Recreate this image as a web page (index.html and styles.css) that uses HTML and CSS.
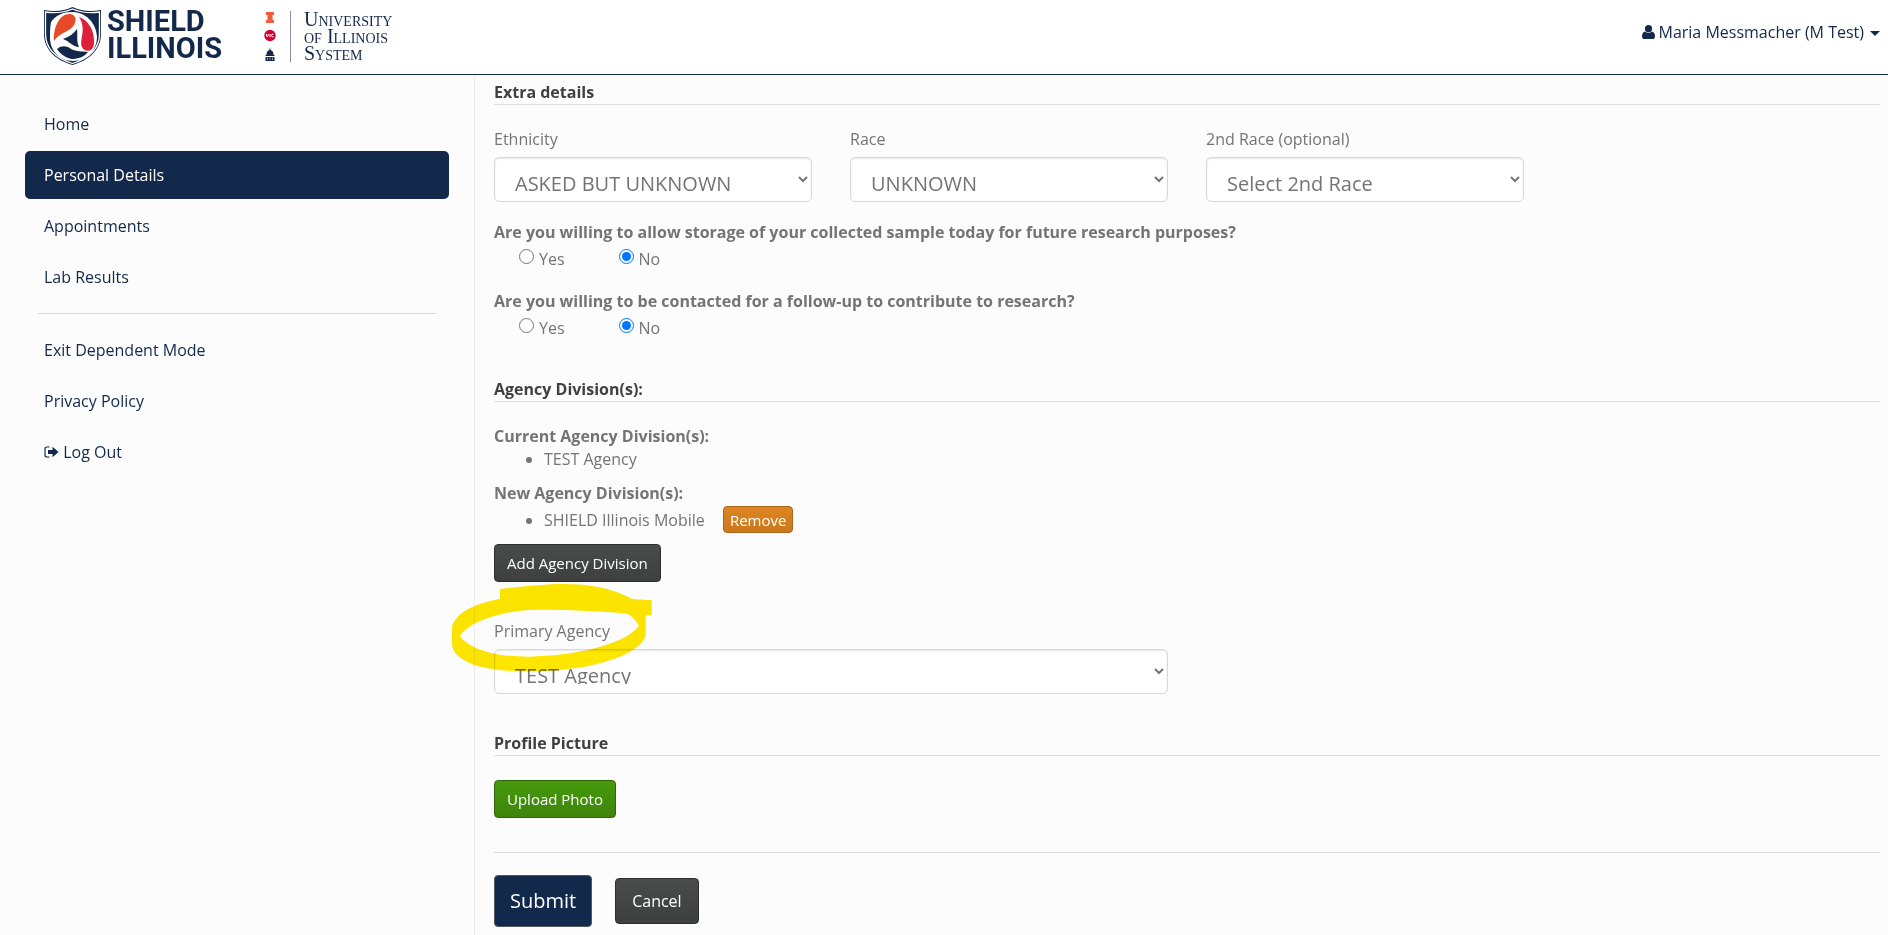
FILE: index.html
```
<!DOCTYPE html>
<html lang="en">
<head>
  <meta charset="UTF-8">
  <meta name="viewport" content="width=device-width, initial-scale=1.0">
  <title>SHIELD Illinois - Personal Details</title>
  <link rel="stylesheet" href="styles.css">
</head>
<body>
  <header class="navbar">
    <a class="brand" href="#">
      <svg class="shield" viewBox="0 0 57 58" aria-hidden="true">
        <path fill="#13294b" d="M28.500 0C37 4 46 5 57 3v24c0 15-11 26-28.500 31C11 53 0 42 0 27V3c11 2 20 1 28.500-3z"/>
        <path fill="none" stroke="#fff" stroke-width="1.300" d="M28.500 2C37 5.500 46 6.500 55.500 5v22c0 14-10 24-27 29.500C11.500 51 1.500 41 1.500 27V5C11 6.500 20 5.500 28.500 2z"/>
        <path fill="#fff" d="M7 15C12 8 19 5 28 5c13 0 24 10 25 25 0 13-10 24-24 24C15 54 6 43 6 31c0-6 0-11 1-16z"/>
        <path fill="#e84a27" d="M10 34C9 20 16 7 25 7c7 0 8 6 5 11-4 7-14 7-20 16z"/>
        <path fill="#dd1f3a" d="M35 10c9 3 16 13 15 27-1 8-9 9-12 3-3-7 5-18-3-30z"/>
        <path fill="#13294b" d="M13 42c5-4 10-3 14 0 6 3 11 2 17 3-4 5-10 7-16 7-6-1-12-5-15-10zM19 32c6-2 10-5 14-10 1 6-1 12 2 18-6 0-10-6-16-8z"/>
      </svg>
      <span class="brand-name">SHIELD<br>ILLINOIS</span>
      <svg class="marks" viewBox="0 0 12 50" aria-hidden="true">
        <path fill="#f15a3a" d="M2 1h8v3H8.500v5H10v3H2V9h1.500V4H2z"/>
        <circle cx="6" cy="24.500" r="5.700" fill="#d50032"/>
        <path fill="none" stroke="#fff" stroke-width="1" d="M2.500 23v2q.8 1.500 1.600 0v-2M6 23v3M9.500 23.200q-2-.5-2 1.300t2 1.300"/>
        <path fill="#13294b" d="M6 36l.6 3c2 .5 3 2.500 3 5h.9v1h-9v-1h.9c0-2.500 1-4.500 3-5zM1.500 46h9v4h-9z"/>
        <path stroke="#fff" stroke-width=".5" d="M3.500 46.500V49M6 46.500V49M8.500 46.500V49"/>
      </svg>
      <span class="system-name">University<br>of Illinois<br>System</span>
    </a>
    <button class="user-menu" type="button">
      <svg class="user-icon" viewBox="0 0 13 14" aria-hidden="true">
        <circle cx="6.500" cy="3.700" r="3.600"/>
        <path d="M3 6.500C.8 7 0 9.200 0 11.400 0 13 1 14 2.500 14h8c1.500 0 2.500-1 2.500-2.600 0-2.200-.8-4.400-3-4.900-2 1.800-5 1.800-7 0z"/>
      </svg>
      Maria Messmacher (M Test)
      <span class="caret"></span>
    </button>
  </header>

  <div class="page">
    <nav class="sidebar">
      <ul class="nav-list">
        <li><a href="#">Home</a></li>
        <li><a class="active" href="#">Personal Details</a></li>
        <li><a href="#">Appointments</a></li>
        <li><a href="#">Lab Results</a></li>
      </ul>
      <hr class="nav-divider">
      <ul class="nav-list">
        <li><a href="#">Exit Dependent Mode</a></li>
        <li><a href="#">Privacy Policy</a></li>
        <li><a href="#"><svg class="logout-icon" viewBox="0 0 15 12" aria-hidden="true">
          <path fill="none" stroke="#13294b" stroke-width="1.200" d="M5.500 1H3Q1 1 1 3v6q0 2 2 2h2.500"/>
          <path fill="#13294b" d="M4 4h4.500V.8L14.500 6l-6 5.200V8H4z"/>
        </svg> Log Out</a></li>
      </ul>
    </nav>

    <main class="content">
      <form>
        <h2 class="section-title">Extra details</h2>
        <div class="row">
          <div class="field">
            <label for="ethnicity">Ethnicity</label>
            <select id="ethnicity"><option>ASKED BUT UNKNOWN</option></select>
          </div>
          <div class="field">
            <label for="race">Race</label>
            <select id="race"><option>UNKNOWN</option></select>
          </div>
          <div class="field">
            <label for="race2">2nd Race (optional)</label>
            <select id="race2"><option>Select 2nd Race</option></select>
          </div>
        </div>

        <fieldset class="question">
          <legend>Are you willing to allow storage of your collected sample today for future research purposes?</legend>
          <div class="options">
            <label><input type="radio" name="storage"> Yes</label>
            <label><input type="radio" name="storage" checked> No</label>
          </div>
        </fieldset>
        <fieldset class="question">
          <legend>Are you willing to be contacted for a follow-up to contribute to research?</legend>
          <div class="options">
            <label><input type="radio" name="contact"> Yes</label>
            <label><input type="radio" name="contact" checked> No</label>
          </div>
        </fieldset>

        <h2 class="section-title">Agency Division(s):</h2>
        <h3 class="list-title">Current Agency Division(s):</h3>
        <ul class="agencies">
          <li>TEST Agency</li>
        </ul>
        <h3 class="list-title">New Agency Division(s):</h3>
        <ul class="agencies">
          <li>SHIELD Illinois Mobile <button class="btn btn-small btn-warning" type="button">Remove</button></li>
        </ul>
        <button class="btn btn-dark" type="button">Add Agency Division</button>

        <div class="row primary">
          <div class="field field-wide">
            <label for="primary">Primary Agency</label>
            <select id="primary"><option>TEST Agency</option></select>
            <!-- marker ring around the label -->
            <svg class="marker" viewBox="36 640 600 264" aria-hidden="true">
              <path fill-rule="evenodd" d="M180 655C250 647 320 640 370 640C450 640 520 653 576 685L635 689V734L617 733V795C600 845 500 880 400 893C300 909 180 905 110 885C70 872 36 850 36 820V770C45 725 110 697 180 685ZM265 718C180 724 90 752 60 795C90 840 180 858 265 858C400 855 550 825 597 766C590 750 575 735 562 729C470 722 380 716 265 718Z"/>
            </svg>
          </div>
        </div>

        <h2 class="section-title">Profile Picture</h2>
        <button class="btn btn-success" type="button">Upload Photo</button>

        <div class="actions">
          <button class="btn btn-large btn-primary" type="submit">Submit</button>
          <button class="btn btn-medium btn-dark" type="button">Cancel</button>
        </div>
      </form>
    </main>
  </div>
</body>
</html>
```

FILE: styles.css
```
* {
  box-sizing: border-box;
}
body {
  margin: 0;
  background: #fcfcfc;
  color: #747474;
  font: 16px/20px "Open Sans", "Noto Sans", sans-serif;
}
ul {
  margin: 0;
  padding: 0;
}

/* header */
.navbar {
  display: flex;
  justify-content: space-between;
  height: 75px;
  padding: 0 8px 0 44px;
  background: #fff;
  border-bottom: 1px solid #13294b;
}
.brand {
  display: flex;
  align-items: flex-start;
  padding-top: 7px;
  color: #13294b;
  text-decoration: none;
}
.shield {
  width: 57px;
  height: 58px;
}
.brand-name {
  width: 117px;
  margin-left: 6px;
  padding-top: 1px;
  font: bold 29px/27px Roboto, sans-serif;
}
.marks {
  width: 12px;
  height: 50px;
  margin: 4px 14px 0 40px;
}
.system-name {
  margin-top: 4px;
  padding-left: 13px;
  border-left: 1px solid #8791a3;
  font: 20px/17px "Liberation Serif", serif;
  font-variant: small-caps;
}
.user-menu {
  display: flex;
  align-items: center;
  align-self: flex-start;
  height: 64px;
  padding: 0;
  border: 0;
  background: none;
  color: #13294b;
  font: inherit;
}
.user-icon {
  width: 13px;
  height: 14px;
  margin-right: 4px;
  fill: #13294b;
}
.caret {
  margin: 2px 0 0 6px;
  border-top: 5px solid #13294b;
  border-left: 5px solid transparent;
  border-right: 5px solid transparent;
}

/* layout */
.page {
  display: flex;
  min-height: calc(100vh - 75px);
}
.sidebar {
  flex: none;
  width: 474px;
  padding: 25px;
}
.content {
  flex: 1;
  padding: 7px 8px 8px 19px;
  border-left: 1px solid #ececec;
}

/* sidebar */
.nav-list {
  display: grid;
  gap: 3px;
  list-style: none;
}
.nav-list a {
  display: block;
  padding: 14px 19px;
  border-radius: 5px;
  color: #13294b;
  text-decoration: none;
}
.nav-list .active {
  background: #13294b;
  color: #fff;
}
.nav-divider {
  margin: 12px 13px;
  border: 0;
  border-top: 1px solid #d9d9d9;
}
.logout-icon {
  width: 15px;
  height: 12px;
}

/* form */
.section-title {
  margin: 0 0 24px;
  padding-bottom: 2px;
  border-bottom: 1px solid #e0e0e0;
  color: #404040;
  font-size: 16px;
  line-height: 20px;
}
.row {
  display: grid;
  grid-template-columns: repeat(4, 1fr);
  gap: 38px;
}
.field {
  position: relative;
}
.field-wide {
  grid-column: span 2;
}
.field label {
  display: block;
  margin-bottom: 8px;
}
.field select {
  display: block;
  width: 100%;
  height: 45px;
  padding: 11px 13px 9px 16px;
  border: 1px solid #d9d9d9;
  border-radius: 5px;
  background: #fff;
  box-shadow: inset 0 1px 2px rgba(0, 0, 0, 0.1);
  color: #747474;
  font: 20px "Open Sans", "Noto Sans", sans-serif;
}
.question {
  margin: 20px 0 22px;
  padding: 0;
  border: 0;
}
.question + .question {
  margin-bottom: 41px;
}
.question legend {
  padding: 0;
  font-weight: bold;
}
.options {
  display: flex;
  gap: 54px;
  padding: 7px 0 0 25px;
}
.options label {
  display: flex;
  gap: 5px;
}
.options input {
  width: 15px;
  height: 15px;
  margin: 0;
}
.list-title {
  margin: 0 0 3px;
  font-size: 16px;
  line-height: 20px;
}
.agencies {
  margin-bottom: 11px;
  padding-left: 50px;
}
.agencies + .list-title {
  margin-top: 14px;
}
.primary {
  margin: 39px 0;
}
.marker {
  position: absolute;
  top: -37px;
  left: -42px;
  width: 200px;
  height: 88px;
  fill: #fee600;
  mix-blend-mode: multiply;
  pointer-events: none;
}

/* buttons */
.btn {
  height: 38px;
  padding: 0 12px;
  border: 1px solid;
  border-radius: 4px;
  color: #fff;
  font: 15px/20px "Open Sans", "Noto Sans", sans-serif;
}
.btn-small {
  height: 27px;
  margin-left: 14px;
  padding: 0 6px;
}
.btn-medium {
  height: 46px;
  padding: 0 16px;
  font-size: 16px;
}
.btn-large {
  height: 52px;
  padding: 0 15px;
  font-size: 20px;
}
.btn-dark {
  background: linear-gradient(#4a4c4b, #3e403f);
  border-color: #2d2f2e;
}
.btn-warning {
  background: linear-gradient(#dd8622, #cb771b);
  border-color: #a96417;
}
.btn-success {
  background: linear-gradient(#469a0d, #3e840b);
  border-color: #2f6707;
}
.btn-primary {
  background: #13294b;
  border-color: #4f5a63;
}
.actions {
  display: flex;
  align-items: center;
  gap: 23px;
  margin-top: 34px;
  padding-top: 22px;
  border-top: 1px solid #d9d9d9;
}
```
